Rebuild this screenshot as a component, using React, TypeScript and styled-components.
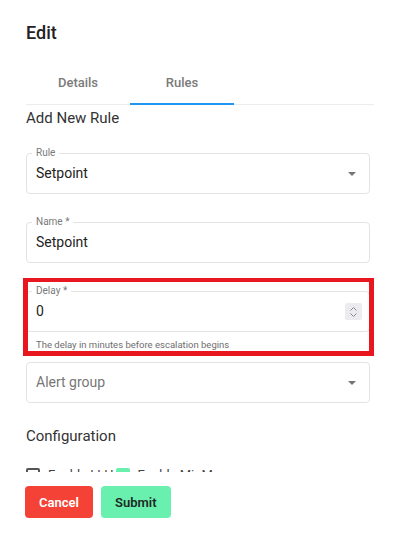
import styled, { createGlobalStyle } from 'styled-components';

const GlobalStyle = createGlobalStyle`
  html, body {
    margin: 0;
    padding: 0;
    background: #ffffff;
    font-family: Roboto, 'Liberation Sans', Arial, sans-serif;
    color: #222;
  }
  * {
    box-sizing: border-box;
  }
`;

function App() {
  return (
    <>
      <GlobalStyle />
      <Dialog>
        <Title>Edit</Title>
        <Tabs>
          <Tab>Details</Tab>
          <Tab isActive>Rules</Tab>
        </Tabs>
        <Body>
          <SectionTitle>Add New Rule</SectionTitle>

          <Field>
            <FieldLabel>Rule</FieldLabel>
            <FieldValue>Setpoint</FieldValue>
            <Caret />
          </Field>

          <Field>
            <FieldLabel>Name *</FieldLabel>
            <FieldValue>Setpoint</FieldValue>
          </Field>

          <Highlight>
            <Field>
              <FieldLabel>Delay *</FieldLabel>
              <FieldValue>0</FieldValue>
              <Spinner>
                <svg width="9" height="12" viewBox="0 0 9 12">
                  <path
                    d="M1.5 4.5 L4.5 1.5 L7.5 4.5 M1.5 7.5 L4.5 10.5 L7.5 7.5"
                    fill="none"
                    stroke="#8a8a8a"
                    strokeWidth="1"
                  />
                </svg>
              </Spinner>
            </Field>
            <HelperText>The delay in minutes before escalation begins</HelperText>
          </Highlight>

          <Field gap={9}>
            <FieldValue placeholder>Alert group</FieldValue>
            <Caret />
          </Field>

          <SectionTitle gap={23}>Configuration</SectionTitle>

          <CheckRow>
            <CheckItem>
              <CheckBox />
              <span>Enable LLH</span>
            </CheckItem>
            <CheckItem>
              <CheckBox checked>
                <svg width="12" height="12" viewBox="0 0 12 12">
                  <path d="M2.5 6.2 L5 8.7 L9.7 3.6" fill="none" stroke="#fff" strokeWidth="1.8" />
                </svg>
              </CheckBox>
              <span>Enable MinMax</span>
            </CheckItem>
          </CheckRow>
        </Body>
        <Footer>
          <Button variant="cancel">Cancel</Button>
          <Button variant="submit">Submit</Button>
        </Footer>
      </Dialog>
    </>
  );
}

export default App;

const Dialog = styled.div`
  width: 400px;
  height: 536px;
  background: #fff;
  display: flex;
  flex-direction: column;
`;

const Title = styled.h2`
  margin: 0;
  padding: 21px 26px 0;
  font-size: 18px;
  line-height: 24px;
  font-weight: 500;
  color: #222;
`;

const Tabs = styled.div`
  margin: 14px 26px 0;
  display: flex;
  border-bottom: 1px solid #ececec;
`;

const Tab = styled.div<{ isActive?: boolean }>`
  width: 104px;
  height: 46px;
  display: flex;
  align-items: center;
  justify-content: center;
  padding-top: 3px;
  font-size: 13px;
  font-weight: 500;
  color: #7a7a7a;
  border-bottom: 2px solid
    ${(props) => (props.isActive ? '#2196f3' : 'transparent')};
  margin-bottom: -1px;
`;

const Body = styled.div`
  height: 367px;
  overflow: hidden;
  padding: 0 30px 0 26px;
`;

const SectionTitle = styled.div<{ gap?: number }>`
  margin-top: ${(props) => props.gap ?? 3}px;
  font-size: 15px;
  line-height: 20px;
  color: #333;
`;

const Field = styled.div<{ gap?: number }>`
  position: relative;
  margin-top: ${(props) => props.gap ?? 28}px;
  height: 41px;
  border: 1px solid #e3e3e3;
  border-radius: 4px;
  display: flex;
  align-items: center;
  padding: 0 9px;

  ${SectionTitle} + & {
    margin-top: 25px;
  }
`;

const FieldLabel = styled.span`
  position: absolute;
  left: 5px;
  top: -7px;
  padding: 0 4px;
  background: #fff;
  font-size: 10px;
  line-height: 12px;
  color: #7a7a7a;
`;

const FieldValue = styled.span<{ placeholder?: boolean }>`
  flex: 1;
  font-size: 14px;
  line-height: 39px;
  color: ${(props) => (props.placeholder ? '#777' : '#222')};
`;

const Caret = styled.span`
  width: 0;
  height: 0;
  margin-right: 4px;
  border-left: 4px solid transparent;
  border-right: 4px solid transparent;
  border-top: 4px solid #757575;
`;

const Spinner = styled.span`
  width: 17px;
  height: 17px;
  margin-right: -2px;
  background: #ececf0;
  border-radius: 2px;
  display: flex;
  align-items: center;
  justify-content: center;
`;

const Highlight = styled.div`
  position: relative;

  & > ${Field} {
    margin-top: 28px;
  }

  &::after {
    content: '';
    position: absolute;
    top: -13px;
    left: -3px;
    right: -4px;
    bottom: -3px;
    border-style: solid;
    border-color: #e8161f;
    border-width: 4px 5px 5px 5px;
    pointer-events: none;
  }
`;

const HelperText = styled.div`
  padding: 4px 0 0 10px;
  font-size: 9.5px;
  line-height: 17px;
  color: #6e6e6e;
`;

const CheckRow = styled.div`
  margin-top: 21px;
  display: flex;
  align-items: center;
  font-size: 13px;
  color: #444;
`;

const CheckItem = styled.label`
  display: flex;
  align-items: center;
  gap: 8px;
  margin-right: 2px;
`;

const CheckBox = styled.span<{ checked?: boolean }>`
  width: 14px;
  height: 14px;
  border-radius: 2px;
  display: flex;
  align-items: center;
  justify-content: center;
  background: ${(props) => (props.checked ? '#69f0ae' : '#fff')};
  border: ${(props) => (props.checked ? 'none' : '2px solid #555')};
`;

const Footer = styled.div`
  display: flex;
  gap: 8px;
  padding: 14px 26px 0 25px;
`;

const Button = styled.button<{ variant: 'cancel' | 'submit' }>`
  height: 32px;
  padding: 0 14px;
  min-width: 68px;
  border: none;
  border-radius: 4px;
  font-family: Roboto, 'Liberation Sans', Arial, sans-serif;
  font-size: 13px;
  font-weight: 600;
  background: ${(props) => (props.variant === 'cancel' ? '#f44336' : '#69f0ae')};
  color: ${(props) => (props.variant === 'cancel' ? '#fff' : '#1e2a24')};
`;
